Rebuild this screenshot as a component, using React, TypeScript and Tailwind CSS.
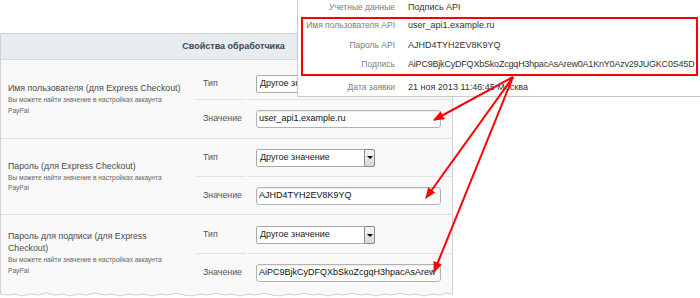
import React from "react";

const Select = () => (
  <div className="flex h-[18px] w-[119px] items-stretch rounded-[2px] border border-[#a9a9a9] bg-white">
    <div className="flex flex-1 items-center overflow-hidden whitespace-nowrap pl-[3px] text-[9px] text-[#222]">
      Другое значение
    </div>
    <div className="my-[-1px] mr-[-1px] flex w-[11px] items-center justify-center rounded-[2px] border border-[#8a8a8a] bg-gradient-to-b from-[#f6f6f6] to-[#d8d8d8]">
      <div className="h-0 w-0 border-x-[3px] border-t-[3px] border-x-transparent border-t-black" />
    </div>
  </div>
);

const Input = ({ value }: { value: string }) => (
  <div className="flex h-[18px] w-[185px] items-center overflow-hidden whitespace-nowrap rounded-[3px] border border-[#b2b2b2] bg-white pl-[2px] text-[9px] text-[#111] shadow-[inset_0_1px_1px_rgba(0,0,0,0.08)]">
    {value}
  </div>
);

type RowProps = {
  title: React.ReactNode;
  value: string;
  h1: string;
  h2: string;
  pt: string;
  last?: boolean;
};

const Row = ({ title, value, h1, h2, pt, last }: RowProps) => (
  <div className={`flex ${last ? "" : "border-b border-[#dedede]"}`}>
    <div className="flex w-[195px] flex-col justify-center pl-[7px] pr-[8px]">
      <div className="whitespace-nowrap text-[8.8px] leading-[12px] text-[#4a4a4a]">{title}</div>
      <div className="mt-[1px] whitespace-nowrap text-[6.6px] leading-[10.5px] text-[#666]">
        Вы можете найти значение в настройках аккаунта
        <br />
        PayPal
      </div>
    </div>
    <div className="flex flex-1 flex-col">
      <div className={`flex ${h1} ${pt} gap-[2px]`}>
        <div className="flex w-[50px] items-center border-b border-[#e3e3e3] pl-[7px] text-[8.8px] text-[#555]">
          Тип
        </div>
        <div className="flex flex-1 items-center border-b border-[#e3e3e3] pl-[8px]">
          <Select />
        </div>
      </div>
      <div className={`flex ${h2} gap-[2px]`}>
        <div className="flex w-[50px] items-center pl-[7px] text-[8.8px] text-[#555]">Значение</div>
        <div className="flex flex-1 items-center pl-[8px]">
          <Input value={value} />
        </div>
      </div>
    </div>
  </div>
);

const PopRow = ({
  label,
  value,
  lw,
  tight,
}: {
  label: string;
  value: string;
  lw: string;
  tight?: boolean;
}) => (
  <div className="flex h-[13px] items-center whitespace-nowrap leading-[13px]">
    <div className={`${lw} shrink-0 text-right text-[8.5px] text-[#7d7d7d]`}>{label}</div>
    <div className={`pl-[13px] text-[9px] text-[#333] ${tight ? "tracking-[-0.2px]" : ""}`}>{value}</div>
  </div>
);

export default function App() {
  return (
    <div className="relative h-[298px] w-[700px] overflow-hidden bg-white font-['Liberation_Sans',Arial,sans-serif]">
      <div className="pt-[33px]">
        <div className="w-[453px] border-x border-t border-[#d2d2d2] bg-[#f9f9f9]">
          <div className="flex h-[26px] items-center justify-center border-b border-[#d2d8db] bg-[#e7ecef] pl-[14px] text-[9px] font-bold text-[#3d474e]">
            Свойства обработчика
          </div>
          <Row
            title="Имя пользователя (для Express Checkout)"
            value="user_api1.example.ru"
            h1="h-[40px]"
            h2="h-[38px]"
            pt="pt-[8px]"
          />
          <Row
            title="Пароль (для Express Checkout)"
            value="AJHD4TYH2EV8K9YQ"
            h1="h-[38px]"
            h2="h-[37px]"
            pt="pt-[0px]"
          />
          <Row
            title={
              <>
                Пароль для подписи (для Express
                <br />
                Checkout)
              </>
            }
            value="AiPC9BjkCyDFQXbSkoZcgqH3hpacAsArew"
            h1="h-[39px]"
            h2="h-[37px]"
            pt="pt-[2px]"
            last
          />
        </div>
        <svg width="454" height="8" className="block" viewBox="0 0 454 8">
          <path
            d="M0.5 0 L0.5 3 L8 4 L15 3 L22 5 L30 3 L38 4 L46 2 L55 4 L63 3 L70 5 L78 3 L86 4 L95 2 L104 4 L112 3 L120 5 L128 3 L136 4 L144 3 L152 5 L160 3 L168 4 L176 2 L184 4 L192 5 L200 3 L208 4 L216 2 L224 4 L232 3 L240 5 L248 3 L256 4 L264 2 L272 4 L280 5 L288 3 L296 4 L304 2 L312 4 L320 3 L328 5 L336 3 L344 4 L352 2 L360 4 L368 3 L376 5 L384 3 L392 4 L400 2 L408 4 L416 3 L424 5 L432 3 L440 4 L446 2 L452.5 3 L452.5 0 Z"
            fill="#f9f9f9"
            stroke="none"
          />
          <path
            d="M0.5 0 L0.5 3 L8 4 L15 3 L22 5 L30 3 L38 4 L46 2 L55 4 L63 3 L70 5 L78 3 L86 4 L95 2 L104 4 L112 3 L120 5 L128 3 L136 4 L144 3 L152 5 L160 3 L168 4 L176 2 L184 4 L192 5 L200 3 L208 4 L216 2 L224 4 L232 3 L240 5 L248 3 L256 4 L264 2 L272 4 L280 5 L288 3 L296 4 L304 2 L312 4 L320 3 L328 5 L336 3 L344 4 L352 2 L360 4 L368 3 L376 5 L384 3 L392 4 L400 2 L408 4 L416 3 L424 5 L432 3 L440 4 L446 2 L452.5 3 L452.5 0"
            fill="none"
            stroke="#cfcfcf"
            strokeWidth="1"
          />
        </svg>
      </div>

      {/* Popup */}
      <div className="absolute left-[297px] top-0 h-[97px] w-[403px] border-b border-l border-[#c9c9c9] bg-white">
        <div className="flex h-[14px] items-center">
          <PopRow label="Учетные данные" value="Подпись API" lw="w-[97px]" />
        </div>
        <div className="ml-[3px] mr-[2px] mt-[3px] flex flex-col gap-[6.5px] border-2 border-[#ff0000] pb-[3px]">
          <PopRow label="Имя пользователя API" value="user_api1.example.ru" lw="w-[92px]" />
          <PopRow label="Пароль API" value="AJHD4TYH2EV8K9YQ" lw="w-[92px]" />
          <PopRow
            label="Подпись"
            value="AiPC9BjkCyDFQXbSkoZcgqH3hpacAsArew0A1KnY0Azv29JUGKC0S45D"
            lw="w-[92px]"
            tight
          />
        </div>
        <div className="mt-[4px] flex h-[14px] items-center">
          <PopRow label="Дата заявки" value="21 ноя 2013 11:46:45 Москва" lw="w-[97px]" />
        </div>
      </div>

      {/* Arrows */}
      <svg className="pointer-events-none absolute left-0 top-0" width="700" height="298" viewBox="0 0 700 298">
        <defs>
          <marker id="ah" markerWidth="11" markerHeight="9" refX="10" refY="4.5" orient="auto" markerUnits="userSpaceOnUse">
            <path d="M0 0 L11 4.5 L0 9 Z" fill="#ff0000" />
          </marker>
        </defs>
        <line x1="513" y1="77" x2="434" y2="120" stroke="#ff0000" strokeWidth="2" markerEnd="url(#ah)" />
        <line x1="513" y1="77" x2="426" y2="198" stroke="#ff0000" strokeWidth="2" markerEnd="url(#ah)" />
        <line x1="513" y1="77" x2="434" y2="272" stroke="#ff0000" strokeWidth="2" markerEnd="url(#ah)" />
      </svg>
    </div>
  );
}
